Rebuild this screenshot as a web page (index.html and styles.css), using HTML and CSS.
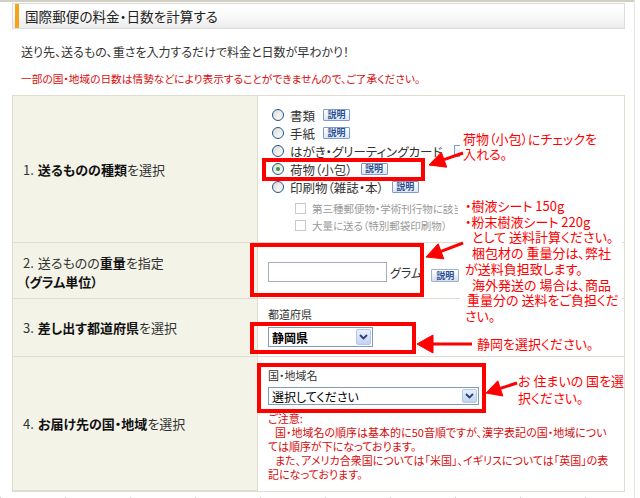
FILE: index.html
```html
<!DOCTYPE html>
<html lang="ja">
<head>
<meta charset="utf-8">
<title>国際郵便の料金・日数を計算する</title>
<link rel="stylesheet" href="styles.css">
</head>
<body>
<div class="page">
  <div class="topline"></div>
  <div class="titlebar"><span class="accent"></span><h1>国際郵便の料金・日数を計算する</h1></div>
  <p class="lead">送り先、送るもの、重さを入力するだけで料金と日数が早わかり！</p>
  <p class="notice">一部の国・地域の日数は情勢などにより表示することができませんので、ご了承ください。</p>

  <div class="form">
    <div class="label"><span class="num">1.</span><b>送るものの種類</b>を選択</div>
    <div class="field f1">
      <ul class="opts">
        <li><span class="radio"></span>書類<span class="btn">説明</span></li>
        <li><span class="radio"></span>手紙<span class="btn">説明</span></li>
        <li><span class="radio"></span>はがき・グリーティングカード<span class="btn cut"></span></li>
        <li><span class="radio on"></span>荷物（小包）<span class="btn">説明</span></li>
        <li><span class="radio"></span>印刷物（雑誌・本）<span class="btn">説明</span></li>
      </ul>
      <ul class="subopts">
        <li><span class="check"></span><span class="clip">第三種郵便物・学術刊行物に該当</span></li>
        <li><span class="check"></span><span class="clip">大量に送る（特別郵袋印刷物）</span></li>
      </ul>
    </div>

    <div class="label two"><span class="num">2.</span>送るものの<b>重量</b>を指定<br><b>（グラム単位）</b></div>
    <div class="field f2">
      <span class="input"></span><span class="unit">グラム</span><span class="btn big">説明</span>
    </div>

    <div class="label"><span class="num">3.</span><b>差し出す都道府県</b>を選択</div>
    <div class="field f3">
      <div class="cap">都道府県</div>
      <div class="select pref"><span class="val bold">静岡県</span><span class="drop"><svg width="9" height="6" viewBox="0 0 9 6"><path d="M1 1 L4.5 4.5 L8 1" fill="none" stroke="#2c3f73" stroke-width="1.8"/></svg></span></div>
    </div>

    <div class="label last"><span class="num">4.</span><b>お届け先の国・地域</b>を選択</div>
    <div class="field f4 last">
      <div class="cap">国・地域名</div>
      <div class="select country"><span class="val">選択してください</span><span class="drop"><svg width="9" height="6" viewBox="0 0 9 6"><path d="M1 1 L4.5 4.5 L8 1" fill="none" stroke="#2c3f73" stroke-width="1.8"/></svg></span></div>
      <div class="caution">
        <div>ご注意:</div>
        <p>国・地域名の順序は基本的に50音順ですが、漢字表記の国・地域につい<br><span class="noind">ては順序が下になっております。</span></p>
        <p>また、アメリカ合衆国については「米国」、イギリスについては「英国」の表<br><span class="noind">記になっております。</span></p>
      </div>
    </div>
  </div>
  <div class="ticks"></div>

  <!-- annotation overlays -->
  <div class="mark m1"></div>
  <div class="mark m2"></div>
  <div class="mark m3"></div>
  <div class="mark m4"></div>

  <div class="note n1">荷物（小包）にチェックを<br>入れる。</div>
  <div class="note n2">・樹液シート 150g<br>・粉末樹液シート 220g<br><span class="ind1">として 送料計算ください。</span><br><span class="ind1">梱包材の 重量分は、弊社</span><br>が送料負担致します。<br><span class="ind1">海外発送の 場合は、商品</span><br><span class="ind2">重量分の 送料をご負担くだ</span><br>さい。</div>
  <div class="note n3">静岡を選択ください。</div>
  <div class="note n4">お 住まいの 国を選<br>択ください。</div>

  <svg class="arrows" width="640" height="498" viewBox="0 0 640 498">
    <g fill="#ff0000" stroke="#ff0000">
      <line x1="463" y1="153" x2="444" y2="159.7" stroke-width="3"/>
      <polygon points="429,165 446.7,167.2 441.3,152.2" stroke-width="1"/>
      <line x1="463" y1="243" x2="441" y2="251.3" stroke-width="3"/>
      <polygon points="426,257 443.8,258.8 438.2,243.8" stroke-width="1"/>
      <line x1="472" y1="344" x2="433" y2="344" stroke-width="3"/>
      <polygon points="417,344 433,335 433,353" stroke-width="1"/>
      <line x1="517" y1="383" x2="500.3" y2="388.4" stroke-width="3"/>
      <polygon points="486,393 502.8,396 497.8,380.8" stroke-width="1"/>
    </g>
  </svg>
</div>
</body>
</html>
```
FILE: styles.css
```css
* { box-sizing: border-box; }
html, body { margin: 0; padding: 0; background: #fff; }
body {
  font-family: "Noto Sans CJK JP", "Noto Sans", sans-serif;
  font-feature-settings: "palt";
  color: #333;
}
.page {
  position: relative;
  width: 635px;
  height: 498px;
  overflow: hidden;
  border-right: 1px solid #e8e6de;
}
.topline { height: 2px; background: #d3cfc3; }

.titlebar {
  margin: 1px 0 0 12px;
  width: 613px;
  height: 26px;
  border: 1px solid #dcdcdc;
  background: linear-gradient(#ffffff 0%, #fbfbfb 45%, #ebebeb 100%);
  display: flex;
  align-items: center;
}
.accent { width: 4px; height: 24px; margin-left: 2px; background: #f5a21c; }
.titlebar h1 {
  margin: 0 0 0 6px;
  font-size: 13.6px;
  font-weight: normal;
  color: #222;
  line-height: 20px;
}
.lead {
  margin: 15px 0 0 21px;
  font-size: 12px;
  line-height: 16px;
  color: #333;
}
.notice {
  margin: 12px 0 0 21px;
  font-size: 10.7px;
  line-height: 14px;
  color: #d80c0c;
}

.form {
  margin: 9px 0 0 12px;
  width: 613px;
  display: grid;
  grid-template-columns: 245px 1fr;
  grid-template-rows: 147px 56px 58px 135px;
  border: 1px solid #e0ddcf;
  border-bottom: 0;
}
.label {
  background: #f4f3e8;
  border-right: 1px solid #e0ddcf;
  border-bottom: 1px solid #e0ddcf;
  display: flex;
  align-items: center;
  padding-left: 10px;
  font-size: 13px;
  line-height: 19px;
  color: #333;
  white-space: nowrap;
}
.label .num { margin-right: 4px; }
.label b { color: #111; font-weight: bold; }
.label.two { display: block; padding-top: 10px; }
.label.last { border-bottom: 2px solid #e0ddcf; }
.field {
  border-bottom: 1px solid #e0ddcf;
  padding-left: 10px;
  font-size: 12px;
}
.field.last { border-bottom: 1px solid #e0ddcf; }

ul { list-style: none; margin: 0; padding: 0; }
.f1 { padding-top: 10px; }
.opts { margin-left: 4px; }
.opts li {
  display: flex;
  align-items: center;
  height: 18px;
  font-size: 12.5px;
  color: #333;
  white-space: nowrap;
}
.radio {
  width: 12px; height: 12px;
  border: 1px solid #21558a;
  border-radius: 50%;
  background: linear-gradient(135deg, #d9dbd7, #ffffff);
  margin-right: 6px;
  position: relative;
  flex: none;
}
.radio.on::after {
  content: "";
  position: absolute;
  left: 3px; top: 3px;
  width: 4px; height: 4px;
  border-radius: 50%;
  background: #2ea02e;
}
.btn {
  display: inline-block;
  margin-left: 8px;
  width: 27px;
  height: 12px;
  border: 1px solid #7d9ccc;
  border-radius: 1px;
  background: linear-gradient(#ffffff, #dde7f6);
  font-size: 9px;
  line-height: 10px;
  text-align: center;
  color: #2a4f96;
  font-weight: bold;
  flex: none;
}
.btn.cut { width: 12px; border-right: 0; margin-left: 12px; }
.btn.big {
  width: 28px; height: 13px; line-height: 11px;
  border-color: #9fb1cc;
  background: linear-gradient(#ffffff, #d7dfeb);
  margin-left: 9px;
}
.subopts { margin: 4px 0 0 27px; }
.subopts li {
  display: flex;
  align-items: center;
  height: 17px;
  font-size: 10.5px;
  color: #999;
  white-space: nowrap;
}
.subopts .clip { display: block; max-width: 146px; overflow: hidden; }
.check {
  width: 11px; height: 11px;
  border: 1px solid #c9c9c9;
  background: #fff;
  margin-right: 6px;
  flex: none;
}

.f2 { padding-top: 19px; display: flex; align-items: flex-start; }
.input {
  width: 119px; height: 20px;
  border: 1px solid #a3adbb;
  background: #fff;
}
.unit { margin-left: 3px; line-height: 22px; font-size: 12px; color: #333; }
.f2 .btn { margin-top: 7px; }

.cap { font-size: 11px; line-height: 14px; color: #333; }
.f3 { padding-top: 8px; }
.f3 .select { margin-top: 6px; }
.f4 { padding-top: 11px; }
.f4 .select { margin-top: 5px; }
.select {
  display: flex;
  align-items: center;
  border: 1px solid #7f9db9;
  background: #fff;
  padding: 1px 1px 1px 3px;
}
.select .val { flex: 1; font-size: 12px; color: #000; }
.select .val.bold { font-weight: bold; }
.pref { width: 105px; height: 20px; }
.country { width: 211px; height: 18px; }
.drop {
  width: 15px;
  align-self: stretch;
  border: 1px solid #b6c8e8;
  border-radius: 2px;
  background: linear-gradient(#e8f0fd, #c2d3f2);
  display: flex;
  align-items: center;
  justify-content: center;
}
.caution {
  margin-top: 6px;
  font-size: 11px;
  line-height: 14px;
  color: #d80c0c;
  white-space: nowrap;
}
.caution p { margin: 0; text-indent: 7px; }

.ticks {
  margin-top: 5px;
  height: 3px;
  background: repeating-linear-gradient(90deg, #c8c8c8 0, #c8c8c8 1px, transparent 1px, transparent 65px);
}

.mark { position: absolute; border: 4px solid #ff0000; }
.m1 { left: 262px; top: 158px; width: 163px; height: 23px; }
.m2 { left: 250px; top: 243px; width: 174px; height: 54px; }
.m3 { left: 250px; top: 322px; width: 166px; height: 32px; }
.m4 { left: 257px; top: 363px; width: 229px; height: 50px; }

.note {
  position: absolute;
  color: #ff0000;
  font-size: 13px;
  white-space: nowrap;
}
.n1 { left: 460px; top: 131px; width: 162px; height: 30px; line-height: 15px; padding-left: 3px; background: #fff; }
.n2 { left: 460px; top: 198px; width: 162px; height: 128px; line-height: 15.7px; padding-left: 5px; background: #fff; }
.n2 .ind1 { padding-left: 7px; }
.n2 .ind2 { padding-left: 2px; }
.n3 { left: 477px; top: 336px; line-height: 16px; }
.n4 { left: 518px; top: 372px; line-height: 17px; }

.arrows { position: absolute; left: 0; top: 0; pointer-events: none; }
```
